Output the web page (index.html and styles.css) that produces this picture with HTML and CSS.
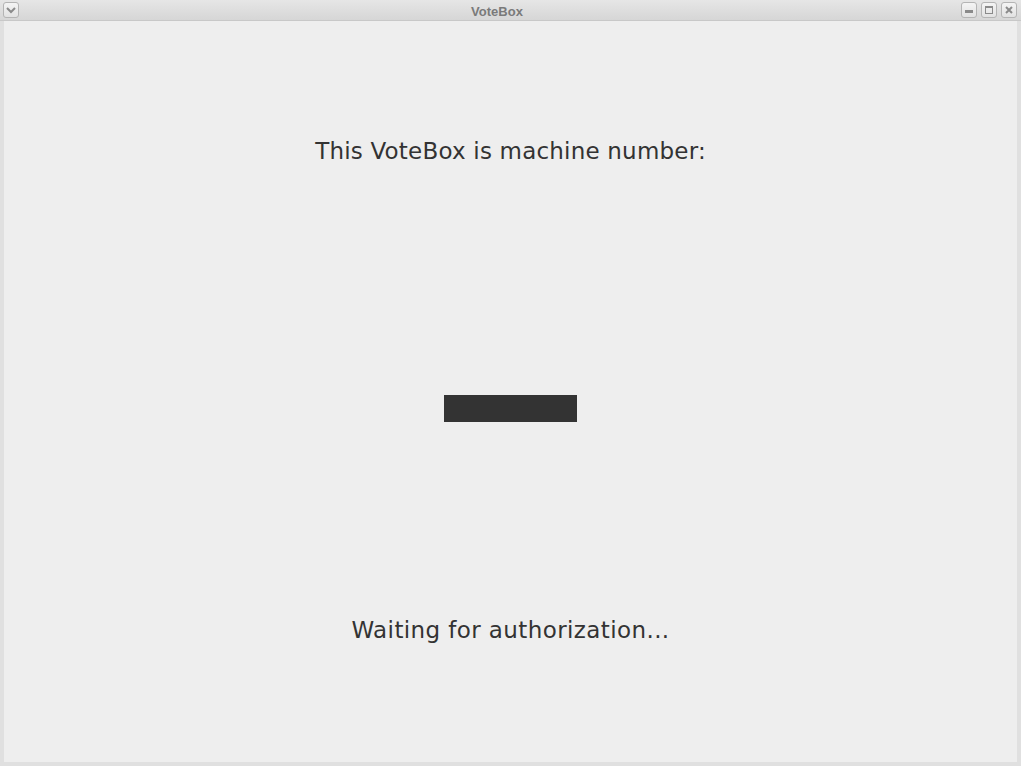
FILE: index.html
```html
<!DOCTYPE html>
<html>
<head>
<meta charset="utf-8">
<link rel="stylesheet" href="styles.css">
</head>
<body>
<div class="window">
  <div class="titlebar">
    <div class="tbtn menu"><svg width="10" height="8" viewBox="0 0 10 8"><path d="M1 2 L5 6 L9 2" fill="none" stroke="#8a8a8a" stroke-width="2"/></svg></div>
    <div class="title">VoteBox</div>
    <div class="tbtns">
      <div class="tbtn"><svg width="10" height="10" viewBox="0 0 10 10"><rect x="1" y="5" width="8" height="3" fill="#8a8a8a"/></svg></div>
      <div class="tbtn"><svg width="10" height="10" viewBox="0 0 10 10"><rect x="1.5" y="1.5" width="7" height="7" fill="none" stroke="#8a8a8a" stroke-width="1"/><rect x="1" y="1" width="8" height="2" fill="#8a8a8a"/></svg></div>
      <div class="tbtn"><svg width="10" height="10" viewBox="0 0 10 10"><path d="M2 2 L8 8 M8 2 L2 8" stroke="#8a8a8a" stroke-width="2"/></svg></div>
    </div>
  </div>
  <div class="content">
    <div class="heading">This VoteBox is machine number:</div>
    <div class="number"></div>
    <div class="status">Waiting for authorization...</div>
  </div>
</div>
</body>
</html>
```
FILE: styles.css
```css
html, body {
  margin: 0;
  padding: 0;
  width: 1021px;
  height: 766px;
  overflow: hidden;
  background: #e2e2e2;
}
.window {
  width: 1021px;
  height: 766px;
  display: flex;
  flex-direction: column;
  box-sizing: border-box;
  padding: 0 4px 4px 4px;
  background: #e0e0e0;
}
.titlebar {
  height: 21px;
  margin: 0 -4px;
  padding: 0 4px 0 3px;
  display: flex;
  align-items: center;
  background: linear-gradient(#e6e6e6, #d6d6d6);
  border-bottom: 1px solid #c8c8c8;
  box-sizing: border-box;
}
.title {
  flex: 1;
  text-align: center;
  font-family: "Liberation Sans", Arial, sans-serif;
  font-weight: bold;
  font-size: 13px;
  color: #7a7a7a;
  padding-left: 14px;
  padding-top: 2px;
}
.tbtns {
  display: flex;
  gap: 4px;
}
.tbtn {
  width: 16px;
  height: 16px;
  box-sizing: border-box;
  border: 1px solid #b4b4b4;
  border-radius: 3px;
  background: linear-gradient(#f4f4f4, #e2e2e2);
  display: flex;
  align-items: center;
  justify-content: center;
}
.content {
  flex: 1;
  background: #eeeeee;
  display: flex;
  flex-direction: column;
  align-items: center;
  font-family: "DejaVu Sans", sans-serif;
  color: #333333;
}
.heading {
  margin-top: 115px;
  font-size: 23px;
  letter-spacing: 0.2px;
  line-height: 30px;
}
.number {
  margin-top: 229px;
  width: 133px;
  height: 27px;
  background: #333333;
}
.status {
  margin-top: 193px;
  font-size: 23px;
  letter-spacing: 0.4px;
  line-height: 30px;
}
```
